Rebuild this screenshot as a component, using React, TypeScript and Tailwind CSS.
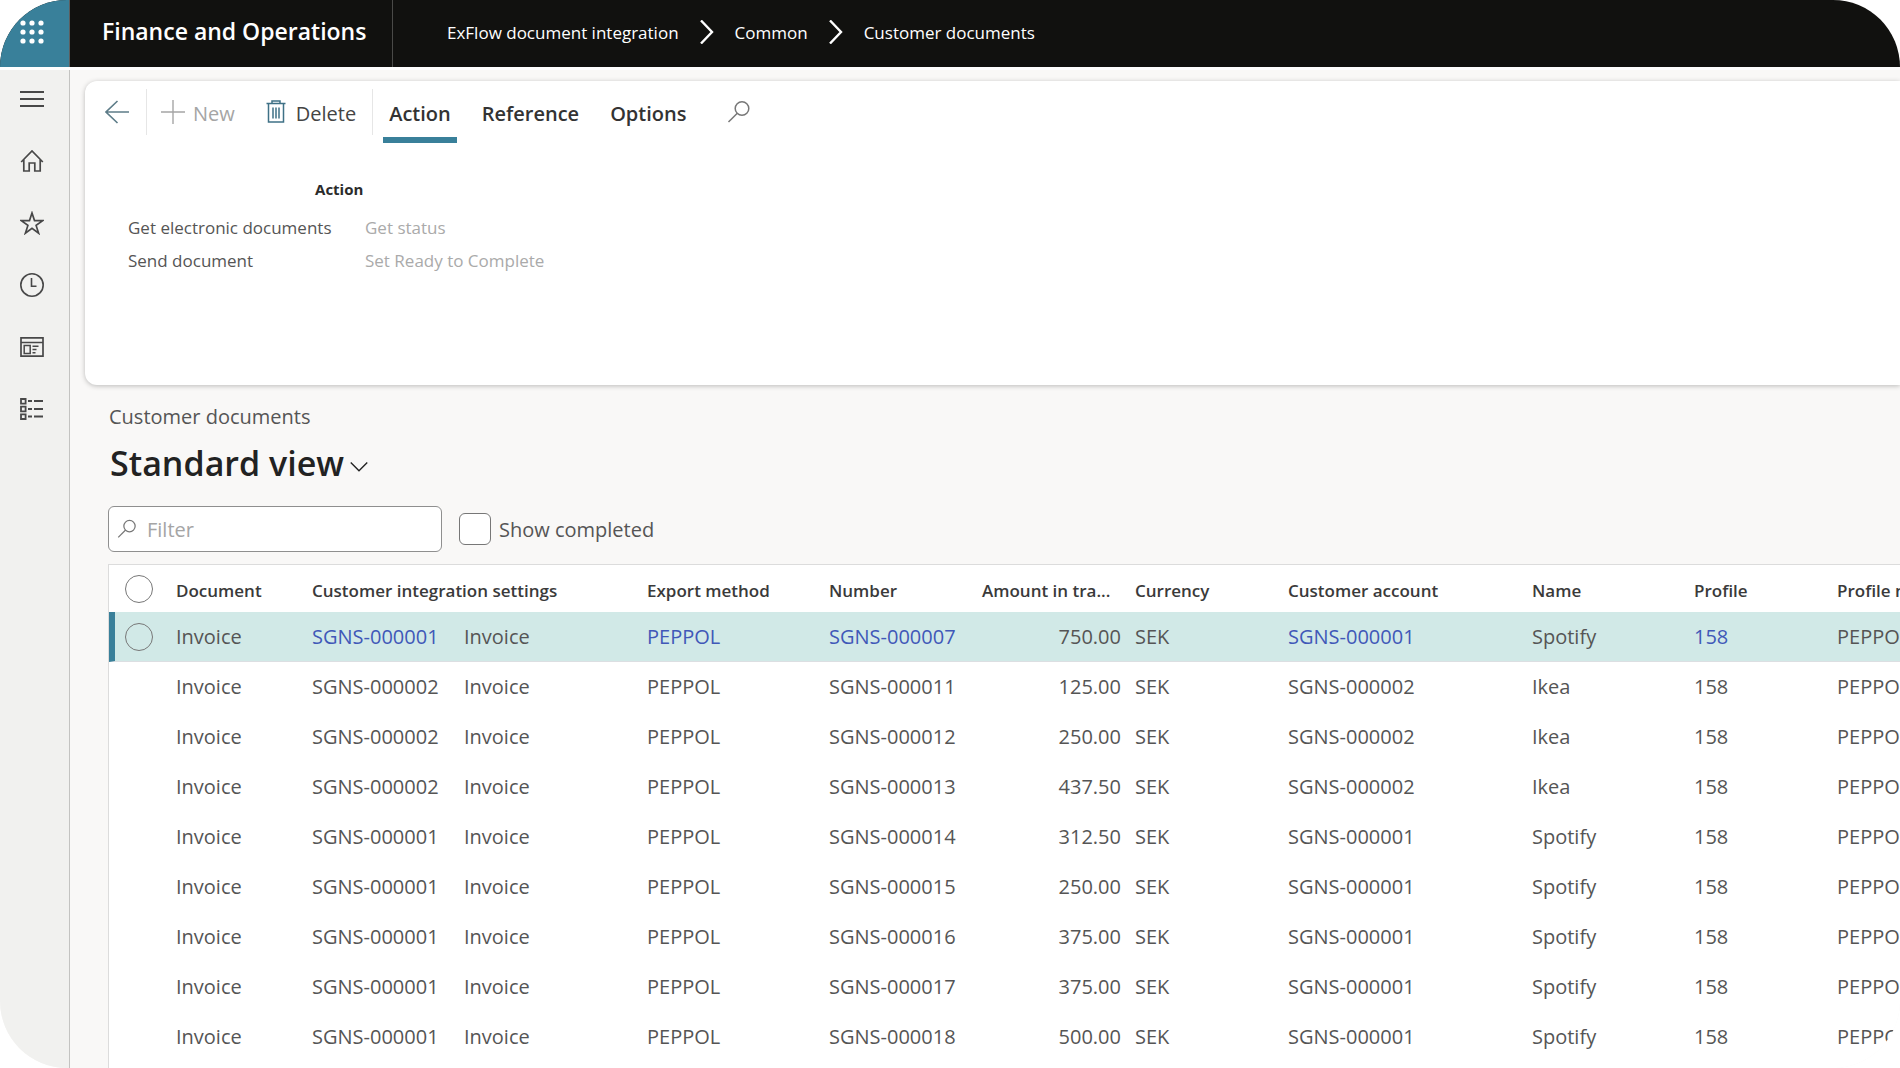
import { useState } from "react";
import type { ReactNode } from "react";
import { clsx } from "clsx";

interface DocumentRow {
  account: string;
  number: string;
  amount: string;
  name: string;
}

const ROWS: DocumentRow[] = [
  { account: "SGNS-000001", number: "SGNS-000007", amount: "750.00", name: "Spotify" },
  { account: "SGNS-000002", number: "SGNS-000011", amount: "125.00", name: "Ikea" },
  { account: "SGNS-000002", number: "SGNS-000012", amount: "250.00", name: "Ikea" },
  { account: "SGNS-000002", number: "SGNS-000013", amount: "437.50", name: "Ikea" },
  { account: "SGNS-000001", number: "SGNS-000014", amount: "312.50", name: "Spotify" },
  { account: "SGNS-000001", number: "SGNS-000015", amount: "250.00", name: "Spotify" },
  { account: "SGNS-000001", number: "SGNS-000016", amount: "375.00", name: "Spotify" },
  { account: "SGNS-000001", number: "SGNS-000017", amount: "375.00", name: "Spotify" },
  { account: "SGNS-000001", number: "SGNS-000018", amount: "500.00", name: "Spotify" },
];

const CRUMBS = ["ExFlow document integration", "Common", "Customer documents"];

const TABS = ["Action", "Reference", "Options"];

interface IconProps {
  className?: string;
  strokeWidth?: number;
  size?: number;
  children: ReactNode;
}

function Icon({ className, strokeWidth = 2, size = 24, children }: IconProps) {
  return (
    <svg
      className={clsx("shrink-0", className)}
      viewBox={`0 0 ${size} ${size}`}
      fill="none"
      stroke="currentColor"
      strokeWidth={strokeWidth}
      aria-hidden="true"
    >
      {children}
    </svg>
  );
}

function SearchIcon({ className }: { className?: string }) {
  return (
    <Icon className={className} strokeWidth={1.5}>
      <circle cx="15" cy="8.5" r="6.8" />
      <path d="M10.3 13.2L1.5 22" />
    </Icon>
  );
}

const NAV_ITEMS: { label: string; icon: ReactNode }[] = [
  {
    label: "Expand the navigation pane",
    icon: <path d="M0 5h24M0 12h24M0 19h24" />,
  },
  {
    label: "Home",
    icon: <path strokeWidth={1.7} d="M1.2 13L12 2l10.8 11M3.8 10.5V22h5.4v-8h5.6v8h5.4V10.5" />,
  },
  {
    label: "Favorites",
    icon: (
      <path
        strokeWidth={1.7}
        d="M12 2l2.5 7.6h8.2l-6.6 4.8 2.5 7.8-6.6-4.8-6.6 4.8 2.5-7.8-6.6-4.8h8.2z"
      />
    ),
  },
  {
    label: "Recent",
    icon: (
      <>
        <circle cx="12" cy="12" r="11.2" strokeWidth={1.6} />
        <path strokeWidth={1.6} d="M11.5 5v8.3h5" />
      </>
    ),
  },
  {
    label: "Workspaces",
    icon: (
      <>
        <path strokeWidth={1.7} d="M1 2.8h22v18.4H1zM1 7.5h22" />
        <path strokeWidth={1.5} d="M4.2 10.5h6v8h-6zM12.5 11.3h6M12.5 14.5h4M12.5 17.8h3" />
      </>
    ),
  },
  {
    label: "Modules",
    icon: (
      <>
        <path strokeWidth={1.8} d="M1 2h4.6v4.6H1zM1 9.7h4.6v4.6H1zM1 17.4h4.6V22H1z" />
        <path strokeWidth={1.8} d="M8 4h4M14 4h9M8 12h4M14 12h9M8 19.5h4M14 19.5h9" />
      </>
    ),
  },
];

function TopBar() {
  return (
    <header className="flex h-[67px] shrink-0 bg-[#11110f] text-white">
      <button
        aria-label="App launcher"
        className="flex w-[70px] shrink-0 items-center border-r border-[#5d5f60] bg-[#39809a] pl-5"
      >
        <svg className="-mt-1 size-6" viewBox="0 0 24 24" fill="currentColor" aria-hidden="true">
          {[3, 12, 21].map((y) => [3, 12, 21].map((x) => <circle key={`${x}-${y}`} cx={x} cy={y} r="2.6" />))}
        </svg>
      </button>
      <div className="flex w-[323px] shrink-0 items-center border-r border-[#4a4a48] pb-1 pl-8">
        <span className="text-[23px] font-semibold whitespace-nowrap">Finance and Operations</span>
      </div>
      <nav aria-label="Breadcrumb" className="flex items-center gap-5 pb-0.5 pl-[54px] text-[17px]">
        {CRUMBS.map((crumb, i) => (
          <div key={crumb} className="flex items-center gap-5">
            {i > 0 && (
              <svg className="mb-0.5 h-6 w-4" viewBox="0 0 16 24" fill="none" stroke="currentColor" strokeWidth={2.4} aria-hidden="true">
                <path d="M2 0.5L13 12L2 23.5" />
              </svg>
            )}
            <a href="#" className="whitespace-nowrap">
              {crumb}
            </a>
          </div>
        ))}
      </nav>
    </header>
  );
}

function Sidebar() {
  return (
    <nav
      aria-label="Main"
      className="flex w-[70px] shrink-0 flex-col gap-[38px] border-r border-[#c3c3c1] bg-[#f1f1ef] pt-[17px] pl-5 text-[#484848]"
    >
      {NAV_ITEMS.map((item) => (
        <a key={item.label} href="#" aria-label={item.label} className="size-6">
          <Icon className="size-6">{item.icon}</Icon>
        </a>
      ))}
    </nav>
  );
}

function ActionPane() {
  const [activeTab, setActiveTab] = useState("Action");

  return (
    <section className="ml-[15px] h-[304px] shrink-0 rounded-l-xl bg-white shadow-[0_1px_5px_rgba(0,0,0,0.25)]">
      <div className="flex h-[62px] items-start text-[20px] whitespace-nowrap">
        <button aria-label="Back" className="mt-2 flex h-[46px] w-[62px] items-center border-r border-[#e6e6e6] pl-5 text-[#5d7c88]">
          <Icon className="size-6" strokeWidth={1.6}>
            <path d="M24 12H1M12.5 1L1 12l11.5 11" />
          </Icon>
        </button>
        <button disabled className="mt-2 flex h-[46px] items-center gap-2 pl-3.5 text-[#a5a5a5]">
          <Icon className="size-6" strokeWidth={1.4}>
            <path d="M12 0v24M0 12h24" />
          </Icon>
          <span className="pt-1">New</span>
        </button>
        <button className="mt-2 ml-[29px] flex h-[46px] items-center gap-2 border-r border-[#e6e6e6] pr-4 text-[#444]">
          <Icon className="size-6 text-[#3f7186]" strokeWidth={1.5}>
            <path d="M2.5 3.5h19M8 3.5V1h8v2.5M4.5 3.5v18.5h15V3.5M9 7.5v11M12 7.5v11M15 7.5v11" />
          </Icon>
          <span className="pt-1">Delete</span>
        </button>
        <div role="tablist" className="flex pl-2.5">
          {TABS.map((tab) => (
            <button
              key={tab}
              role="tab"
              aria-selected={tab === activeTab}
              onClick={() => setActiveTab(tab)}
              className={clsx(
                "mr-[19px] h-[62px] border-b-[6px] px-1.5 pt-2.5 font-semibold text-[#333]",
                tab === activeTab ? "border-[#39809a]" : "border-transparent"
              )}
            >
              {tab}
            </button>
          ))}
        </div>
        <button aria-label="Search actions" className="mt-2 ml-4 flex h-[46px] items-center text-[#777]">
          <SearchIcon className="size-6" />
        </button>
      </div>

      <div className="mt-8 ml-[43px] w-max">
        <h2 className="pl-1.5 text-center text-[15px] leading-7 font-bold text-[#2b2b2b]">Action</h2>
        <div className="mt-2 grid grid-cols-[237px_auto] justify-items-start text-[17px] leading-[33px] text-[#555]">
          <button>Get electronic documents</button>
          <button disabled className="text-[#aaa]">
            Get status
          </button>
          <button>Send document</button>
          <button disabled className="text-[#aaa]">
            Set Ready to Complete
          </button>
        </div>
      </div>
    </section>
  );
}

function SelectCircle({ label }: { label: string }) {
  return (
    <input
      type="checkbox"
      aria-label={label}
      className="block size-7 appearance-none rounded-full border border-[#777] checked:bg-[#39809a]"
    />
  );
}

function Cell({ link, children }: { link?: boolean; children: ReactNode }) {
  return (
    <td>
      {link ? (
        <a href="#" className="text-[#4058b8]">
          {children}
        </a>
      ) : (
        children
      )}
    </td>
  );
}

function DocumentsTable() {
  return (
    <div className="mt-3 flex-1 overflow-hidden border-t border-l border-[#dcdcdc] bg-white">
      <table className="w-full table-fixed border-separate border-spacing-0 text-left text-[20px] whitespace-nowrap text-[#555]">
        <colgroup>
          <col className="w-[67px]" />
          <col className="w-[136px]" />
          <col className="w-[152px]" />
          <col className="w-[183px]" />
          <col className="w-[182px]" />
          <col className="w-[153px]" />
          <col className="w-[153px]" />
          <col className="w-[153px]" />
          <col className="w-[244px]" />
          <col className="w-[162px]" />
          <col className="w-[143px]" />
          <col />
        </colgroup>
        <thead>
          <tr className="h-[47px] text-[17px] text-[#3a3a3a] [&>th]:p-0 [&>th]:pt-1 [&>th]:font-semibold">
            <th className="pt-0! pl-4!">
              <SelectCircle label="Select all documents" />
            </th>
            <th>Document</th>
            <th colSpan={2}>Customer integration settings</th>
            <th>Export method</th>
            <th>Number</th>
            <th>Amount in tra...</th>
            <th>Currency</th>
            <th>Customer account</th>
            <th>Name</th>
            <th>Profile</th>
            <th>Profile name</th>
          </tr>
        </thead>
        <tbody>
          {ROWS.map((row, i) => {
            const selected = i === 0;
            return (
              <tr
                key={row.number}
                className={clsx("h-[50px] [&>td]:p-0", selected && "bg-[#d1e9e7] [&>td]:border-b [&>td]:border-b-[#dcdfe2]")}
              >
                <td className={clsx(selected && "border-l-[6px] border-l-[#39809a] pl-2.5!")}>
                  {selected && <SelectCircle label={`Select ${row.number}`} />}
                </td>
                <Cell>Invoice</Cell>
                <Cell link={selected}>{row.account}</Cell>
                <Cell>Invoice</Cell>
                <Cell link={selected}>PEPPOL</Cell>
                <Cell link={selected}>{row.number}</Cell>
                <td className="pr-3.5! text-right">{row.amount}</td>
                <Cell>SEK</Cell>
                <Cell link={selected}>{row.account}</Cell>
                <Cell>{row.name}</Cell>
                <Cell link={selected}>158</Cell>
                <Cell>PEPPOL</Cell>
              </tr>
            );
          })}
        </tbody>
      </table>
    </div>
  );
}

export default function App() {
  return (
    <div className="min-h-screen bg-white font-['Open_Sans','Noto_Sans',sans-serif]">
      <div className="flex min-h-screen flex-col overflow-hidden rounded-[67px] bg-[#f9f8f7]">
        <TopBar />
        <div className="flex flex-1 border-t-[3px] border-white">
          <Sidebar />
          <main className="flex min-w-0 flex-1 flex-col pt-[11px]">
            <ActionPane />
            <div className="flex flex-1 flex-col pt-4 pl-[38px]">
              <p className="pl-px text-[20px] leading-8 text-[#555]">Customer documents</p>
              <button className="flex items-center gap-1.5 self-start pl-0.5 text-[34px] leading-[60px] font-semibold text-[#222]">
                Standard view
                <Icon className="mt-2 size-[18px]" strokeWidth={1.8}>
                  <path d="M1 6l11 11L23 6" />
                </Icon>
              </button>
              <div className="mt-[13px] flex items-center gap-[17px] text-[20px] text-[#555]">
                <label className="flex h-[46px] w-[334px] items-center gap-2.5 rounded-md border border-[#8f8f8f] bg-white px-2">
                  <SearchIcon className="size-5 text-[#777]" />
                  <input type="text" aria-label="Filter" placeholder="Filter" className="min-w-0 flex-1 pt-0.5 outline-none placeholder:text-[#a5a5a5]" />
                </label>
                <label className="flex items-center gap-2">
                  <input type="checkbox" className="size-8 appearance-none rounded-md border border-[#777] bg-white checked:bg-[#39809a]" />
                  <span className="pt-0.5">Show completed</span>
                </label>
              </div>
              <DocumentsTable />
            </div>
          </main>
        </div>
      </div>
    </div>
  );
}
